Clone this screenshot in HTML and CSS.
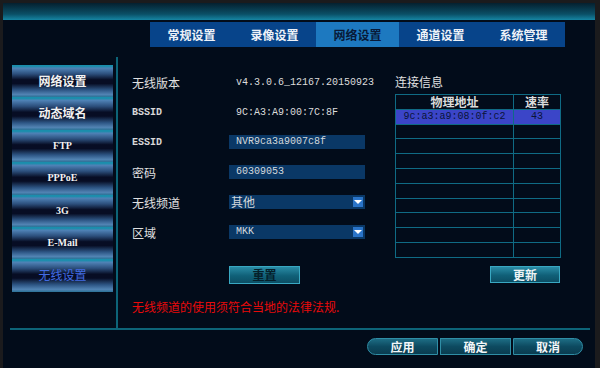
FILE: index.html
```html
<!DOCTYPE html>
<html lang="zh-CN">
<head>
    <meta charset="UTF-8">
    <title>网络设置</title>
    <link rel="stylesheet" href="styles.css">
</head>
<body>
    <div class="frame">
        <div class="topbar"></div>
        <nav class="tabs">
            <span class="tab">常规设置</span>
            <span class="tab">录像设置</span>
            <span class="tab active">网络设置</span>
            <span class="tab">通道设置</span>
            <span class="tab">系统管理</span>
        </nav>
        <div class="main">
            <ul class="side">
                <li>网络设置</li>
                <li>动态域名</li>
                <li class="latin">FTP</li>
                <li class="latin">PPPoE</li>
                <li class="latin">3G</li>
                <li class="latin">E-Mail</li>
                <li class="current">无线设置</li>
            </ul>
            <div class="content">
                <div class="panels">
                    <div class="form">
                        <div class="row">
                            <span class="label">无线版本</span>
                            <span class="value">v4.3.0.6_12167.20150923</span>
                        </div>
                        <div class="row">
                            <span class="label mono">BSSID</span>
                            <span class="value">9C:A3:A9:00:7C:8F</span>
                        </div>
                        <div class="row">
                            <span class="label mono">ESSID</span>
                            <span class="field">NVR9ca3a9007c8f</span>
                        </div>
                        <div class="row">
                            <span class="label">密码</span>
                            <span class="field">60309053</span>
                        </div>
                        <div class="row">
                            <span class="label">无线频道</span>
                            <span class="field select cjk">其他<i class="arrow"></i></span>
                        </div>
                        <div class="row">
                            <span class="label">区域</span>
                            <span class="field select">MKK<i class="arrow"></i></span>
                        </div>
                        <button class="btn-teal reset">重置</button>
                    </div>
                    <div class="conn">
                        <div class="conn-title">连接信息</div>
                        <table class="conn-table">
                            <tr><th class="mac">物理地址</th><th>速率</th></tr>
                            <tr class="selected"><td>9c:a3:a9:08:0f:c2</td><td>43</td></tr>
                            <tr><td></td><td></td></tr>
                            <tr><td></td><td></td></tr>
                            <tr><td></td><td></td></tr>
                            <tr><td></td><td></td></tr>
                            <tr><td></td><td></td></tr>
                            <tr><td></td><td></td></tr>
                            <tr><td></td><td></td></tr>
                            <tr><td></td><td></td></tr>
                            <tr><td></td><td></td></tr>
                        </table>
                        <button class="btn-teal refresh">更新</button>
                    </div>
                </div>
                <p class="note">无线频道的使用须符合当地的法律法规.</p>
            </div>
        </div>
        <div class="footer">
            <button class="act first">应用</button>
            <button class="act">确定</button>
            <button class="act last">取消</button>
        </div>
    </div>
</body>
</html>
```

FILE: styles.css
```css
body {
    margin: 0;
    background-color: #1b1b1d;
    font-family: "Noto Sans CJK SC", sans-serif;
    color: #e4e4e4;
}
.frame {
    margin: 3px 5px 0 3px;
    height: 365px;
    background-color: #020c1a;
    display: flex;
    flex-direction: column;
}
.topbar {
    height: 17px;
    background: linear-gradient(#05202f, #0a4f66 65%, #1585a3);
}
.tabs {
    display: flex;
    margin: 2px 0 0 147px;
    height: 25px;
}
.tab {
    width: 83px;
    background-color: #07448a;
    text-align: center;
    line-height: 25px;
    font-size: 12px;
    font-weight: bold;
    color: #eef2f8;
}
.tab.active {
    background-color: #1d79c0;
    color: #081a38;
}
.main {
    display: flex;
    margin: 10px 5px 0 7px;
    height: 271px;
    border-bottom: 2px solid #0d6478;
}
.side {
    list-style: none;
    margin: 0;
    padding: 8px 0 0 2px;
    width: 104px;
    border-right: 2px solid #0d6478;
}
.side li {
    width: 101px;
    height: 32.4px;
    line-height: 32px;
    text-align: center;
    font-size: 12px;
    font-weight: bold;
    color: #f2f2f2;
    background: linear-gradient(#1a8eac 0, #1a8eac 4%, #4f82b6 10%, #2c4f7c 28%, #070d24 46%, #070d24 58%, #2d5584 78%, #5283b3 92%, #2a7296 100%);
}
.side li.latin {
    font-family: "Liberation Serif", serif;
    font-size: 10px;
}
.side li.current {
    color: #426ce4;
    font-weight: normal;
}
.content {
    flex: 1;
    padding: 10px 0 0 14px;
}
.panels {
    display: flex;
}
.form {
    width: 263px;
}
.row {
    display: grid;
    grid-template-columns: 97px 136px;
    align-items: center;
    height: 30px;
}
.label {
    font-size: 12px;
    color: #e0e0e0;
}
.mono, .value, .field {
    font-family: "Liberation Mono", "Noto Sans CJK SC", monospace;
    font-size: 10px;
}
.label.mono {
    font-weight: bold;
    color: #d8d8d8;
}
.value {
    padding-left: 7px;
    color: #dcdcdc;
    white-space: nowrap;
}
.field {
    position: relative;
    height: 14px;
    line-height: 14px;
    padding-left: 7px;
    background-color: #0a3866;
    color: #d4d8dc;
}
.field.cjk {
    font-family: "Noto Sans CJK SC", sans-serif;
    font-size: 12px;
    padding-left: 2px;
}
.arrow {
    position: absolute;
    right: 2px;
    top: 2px;
    width: 10px;
    height: 10px;
    background-color: #2a74c8;
}
.arrow::after {
    content: "";
    position: absolute;
    left: 1px;
    top: 3px;
    border-left: 4px solid transparent;
    border-right: 4px solid transparent;
    border-top: 4px solid #ffffff;
}
.btn-teal {
    display: block;
    height: 18px;
    width: 71px;
    padding: 0;
    border: 1px solid #39a8c2;
    background: linear-gradient(#2a8ca6, #106078 55%, #0c4e64);
    font-family: "Noto Sans CJK SC", sans-serif;
    font-size: 12px;
    font-weight: bold;
    line-height: 16px;
}
.reset {
    margin: 19px 0 0 97px;
    color: #05202a;
}
.refresh {
    margin: 8px 0 0 95px;
    width: 70px;
    height: 17px;
    color: #eef4f6;
}
.conn {
    width: 166px;
}
.conn-title {
    height: 27px;
    line-height: 30px;
    font-size: 12px;
    color: #e0e0e0;
}
.conn-table {
    width: 166px;
    border-collapse: collapse;
    border: 1px solid #0f6b84;
}
.conn-table tr {
    height: 14.8px;
}
.conn-table th, .conn-table td {
    border: 1px solid #0f6b84;
    padding: 0;
    text-align: center;
    line-height: 13px;
}
.conn-table th {
    font-size: 12px;
    font-weight: bold;
    color: #dcdcdc;
}
.conn-table th.mac {
    width: 117px;
}
.conn-table td {
    font-family: "Liberation Mono", monospace;
    font-size: 10px;
    color: #0a1438;
}
.conn-table tr.selected td {
    background-color: #3b45c8;
}
.note {
    margin: 15px 0 0 0;
    font-size: 12px;
    line-height: 16px;
    color: #e80a0a;
}
.footer {
    display: flex;
    justify-content: flex-end;
    gap: 2px;
    padding: 8px 12px 0 0;
}
.act {
    width: 71px;
    height: 17px;
    padding: 0;
    border: 1px solid #2f8ea6;
    background: linear-gradient(#1d6c84, #0d4a60 50%, #0a3c50);
    font-family: "Noto Sans CJK SC", sans-serif;
    font-size: 12px;
    font-weight: bold;
    line-height: 15px;
    color: #f2f6f8;
}
.act.first {
    border-radius: 9px 0 0 9px;
}
.act.last {
    width: 70px;
    border-radius: 0 9px 9px 0;
}
```
